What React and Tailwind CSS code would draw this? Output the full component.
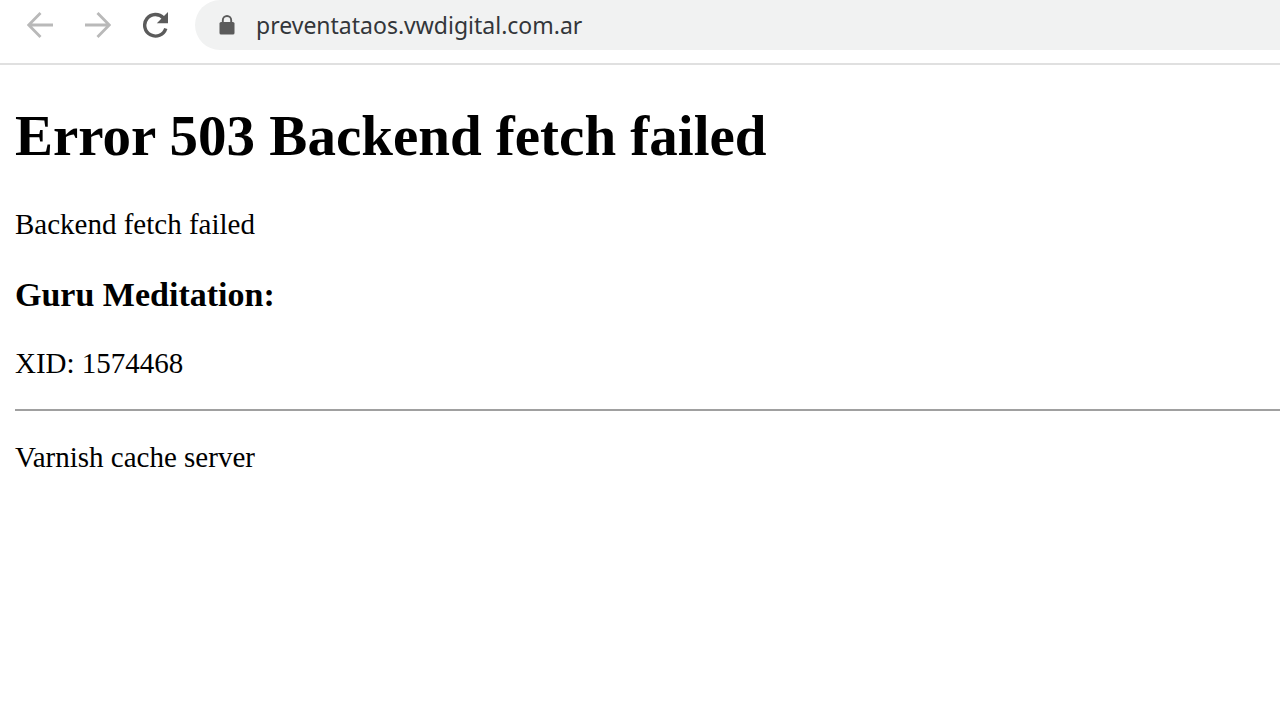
import React, { useState } from "react";

const BackIcon = () => (
    <svg className="w-[26px] h-[26px]" viewBox="0 0 26 26" fill="none" stroke="currentColor">
        <path d="M26 13H2M13.5 1L1.7 13l11.8 12" strokeWidth="2.8" />
    </svg>
);

const ForwardIcon = () => (
    <svg className="w-[26px] h-[26px]" viewBox="0 0 26 26" fill="none" stroke="currentColor">
        <path d="M0 13h24M12.5 1l11.8 12-11.8 12" strokeWidth="2.8" />
    </svg>
);

const ReloadIcon = () => (
    <svg className="w-[26px] h-[26px]" viewBox="0 0 26 26" fill="none">
        <path d="M20.5 6A10.8 10.8 0 1 0 22.8 16.5" stroke="currentColor" strokeWidth="3.4" />
        <path d="M25 0v11.2H13.8z" fill="currentColor" />
    </svg>
);

const LockIcon = () => (
    <svg className="w-4 h-5" viewBox="0 0 16 20" fill="none">
        <path d="M3.8 9V5.2a4.2 4.2 0 0 1 8.4 0V9" stroke="currentColor" strokeWidth="1.9" />
        <rect x="0.5" y="7" width="15" height="12.5" rx="1.6" fill="currentColor" />
    </svg>
);

const Toolbar = () => {
    const [url, setUrl] = useState("preventataos.vwdigital.com.ar");

    return (
        <header className="flex items-center border-b-2 border-[#e0e0e0] pb-[13px] pl-[27px]">
            <nav className="flex gap-8 text-[#b9b9b9]">
                <button type="button" aria-label="Back" disabled>
                    <BackIcon />
                </button>
                <button type="button" aria-label="Forward" disabled>
                    <ForwardIcon />
                </button>
                <button type="button" aria-label="Reload" className="text-[#5b5b5b]">
                    <ReloadIcon />
                </button>
            </nav>

            <div className="ml-[26px] flex h-[50px] flex-1 items-center rounded-l-full bg-[#f1f2f2] pl-6 text-[#5b5b5b]">
                <LockIcon />
                <input
                    type="text"
                    aria-label="Address"
                    className="ml-[21px] min-w-0 flex-1 bg-transparent font-['Noto_Sans',sans-serif] text-[23px] leading-8 text-[#33363a] outline-none"
                    value={url}
                    onChange={(e) => setUrl(e.target.value)}
                />
            </div>
        </header>
    );
};

const App = () => {
    return (
        <div className="overflow-x-hidden bg-white text-black">
            <Toolbar />

            <main className="pl-[15px] pt-[39px] font-['Liberation_Serif',serif] text-[29px] leading-8">
                <h1 className="text-[57px] font-bold leading-[64px]">
                    Error 503 Backend fetch failed
                </h1>
                <p className="mt-10">Backend fetch failed</p>
                <h3 className="mt-[35px] text-[34px] font-bold leading-10">Guru Meditation:</h3>
                <p className="mt-8">XID: 1574468</p>
                <hr className="my-[30px] border-t-2 border-[#a0a0a0]" />
                <p>Varnish cache server</p>
            </main>
        </div>
    );
};

export default App;
